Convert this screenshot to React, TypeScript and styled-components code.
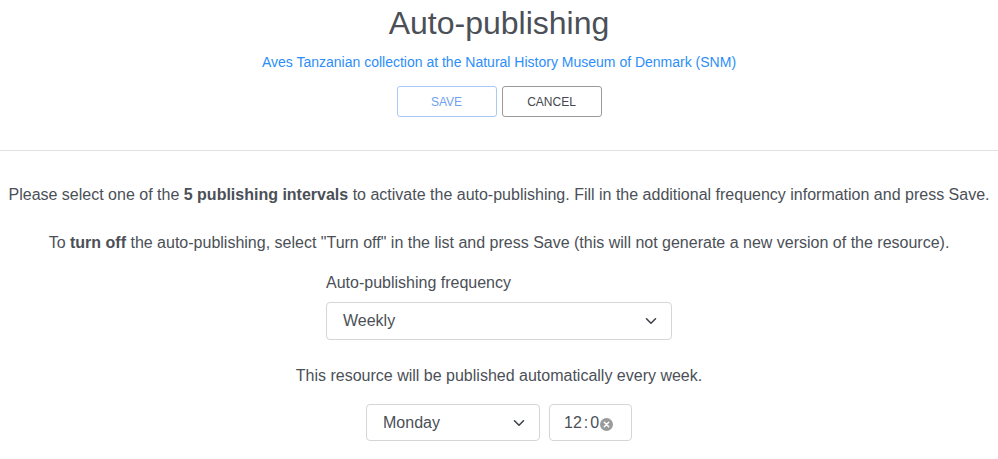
import * as React from "react";
import styled, { createGlobalStyle } from "styled-components";

const GlobalStyle = createGlobalStyle`
  body {
    margin: 0;
    background: #ffffff;
    font-family: "Liberation Sans", Arial, sans-serif;
    color: #4b5057;
  }
`;

const Page = styled.div`
  display: flex;
  flex-direction: column;
  width: 998px;
`;

const Header = styled.header`
  display: flex;
  flex-direction: column;
  align-items: center;
  padding-top: 5px;
  padding-bottom: 33px;
  border-bottom: 1px solid #e2e2e2;
`;

const Title = styled.h1`
  margin: 0;
  font-size: 32px;
  font-weight: 400;
  line-height: 36px;
  color: #4b5057;
`;

const Subtitle = styled.a`
  margin-top: 13px;
  font-size: 14px;
  line-height: 16px;
  color: #2c8ef8;
  text-decoration: none;
`;

const ButtonRow = styled.div`
  display: flex;
  gap: 5px;
  margin-top: 16px;
`;

const Button = styled.button<{ $primary?: boolean }>`
  width: 100px;
  height: 31px;
  background: #ffffff;
  border: 1px solid ${({ $primary }) => ($primary ? "#a9c9f9" : "#9a9a9a")};
  border-radius: 3px;
  color: ${({ $primary }) => ($primary ? "#6fa1ef" : "#44484e")};
  font-family: "Liberation Sans", Arial, sans-serif;
  font-size: 12px;
  text-transform: uppercase;
  cursor: pointer;
`;

const Body = styled.section`
  display: flex;
  flex-direction: column;
  align-items: center;
  padding-top: 34px;
`;

const Text = styled.p<{ $top?: number; $bottom?: number }>`
  margin: ${({ $top }) => $top ?? 0}px 0 ${({ $bottom }) => $bottom ?? 0}px;
  font-size: 16px;
  line-height: 20px;
  text-align: center;
  color: #4b5057;

  & b {
    font-weight: 700;
  }
`;

const Field = styled.div`
  display: flex;
  flex-direction: column;
  width: 346px;
  margin-top: 20px;
`;

const Label = styled.label`
  font-size: 16px;
  line-height: 20px;
  margin-bottom: 9px;
`;

const SelectBox = styled.div<{ $width: number; $height: number }>`
  display: flex;
  align-items: center;
  justify-content: space-between;
  box-sizing: border-box;
  width: ${({ $width }) => $width}px;
  height: ${({ $height }) => $height}px;
  padding: 0 14px 0 16px;
  border: 1px solid #d3d5d8;
  border-radius: 4px;
  font-size: 16px;
  color: #4b5057;
  background: #ffffff;
`;

const Chevron = () => (
  <svg width="12" height="8" viewBox="0 0 12 8" fill="none">
    <path d="M1.5 1.8 6 6.2l4.5-4.4" stroke="#3f4349" strokeWidth="1.6" strokeLinecap="round" strokeLinejoin="round" />
  </svg>
);

const Row = styled.div`
  display: flex;
  gap: 9px;
  margin-top: 18px;
`;

const TimeBox = styled.div`
  display: flex;
  align-items: center;
  box-sizing: border-box;
  width: 83px;
  height: 37px;
  padding-left: 14px;
  border: 1px solid #d3d5d8;
  border-radius: 4px;
  font-size: 16px;
  color: #4b5057;
`;

const TimePart = styled.span`
  white-space: nowrap;
`;

const TimeSep = styled.span`
  margin: 0 2px;
`;

const ClearIcon = styled.svg`
  margin-left: 1px;
  margin-top: 3px;
`;

export default function App() {
  return (
    <Page>
      <GlobalStyle />
      <Header>
        <Title>Auto-publishing</Title>
        <Subtitle href="#">Aves Tanzanian collection at the Natural History Museum of Denmark (SNM)</Subtitle>
        <ButtonRow>
          <Button $primary>Save</Button>
          <Button>Cancel</Button>
        </ButtonRow>
      </Header>
      <Body>
        <Text $bottom={28}>
          Please select one of the <b>5 publishing intervals</b> to activate the auto-publishing. Fill in the additional
          frequency information and press Save.
        </Text>
        <Text>
          To <b>turn off</b> the auto-publishing, select "Turn off" in the list and press Save (this will not generate a
          new version of the resource).
        </Text>
        <Field>
          <Label>Auto-publishing frequency</Label>
          <SelectBox $width={346} $height={38}>
            <span>Weekly</span>
            <Chevron />
          </SelectBox>
        </Field>
        <Text $top={26}>This resource will be published automatically every week.</Text>
        <Row>
          <SelectBox $width={174} $height={37}>
            <span>Monday</span>
            <Chevron />
          </SelectBox>
          <TimeBox>
            <TimePart>12</TimePart>
            <TimeSep>:</TimeSep>
            <TimePart>0</TimePart>
            <ClearIcon width="13" height="13" viewBox="0 0 13 13">
              <circle cx="6.5" cy="6.5" r="6.5" fill="#9a9a9a" />
              <path d="M4.3 4.3l4.4 4.4M8.7 4.3l-4.4 4.4" stroke="#ffffff" strokeWidth="1.5" strokeLinecap="round" />
            </ClearIcon>
          </TimeBox>
        </Row>
      </Body>
    </Page>
  );
}
